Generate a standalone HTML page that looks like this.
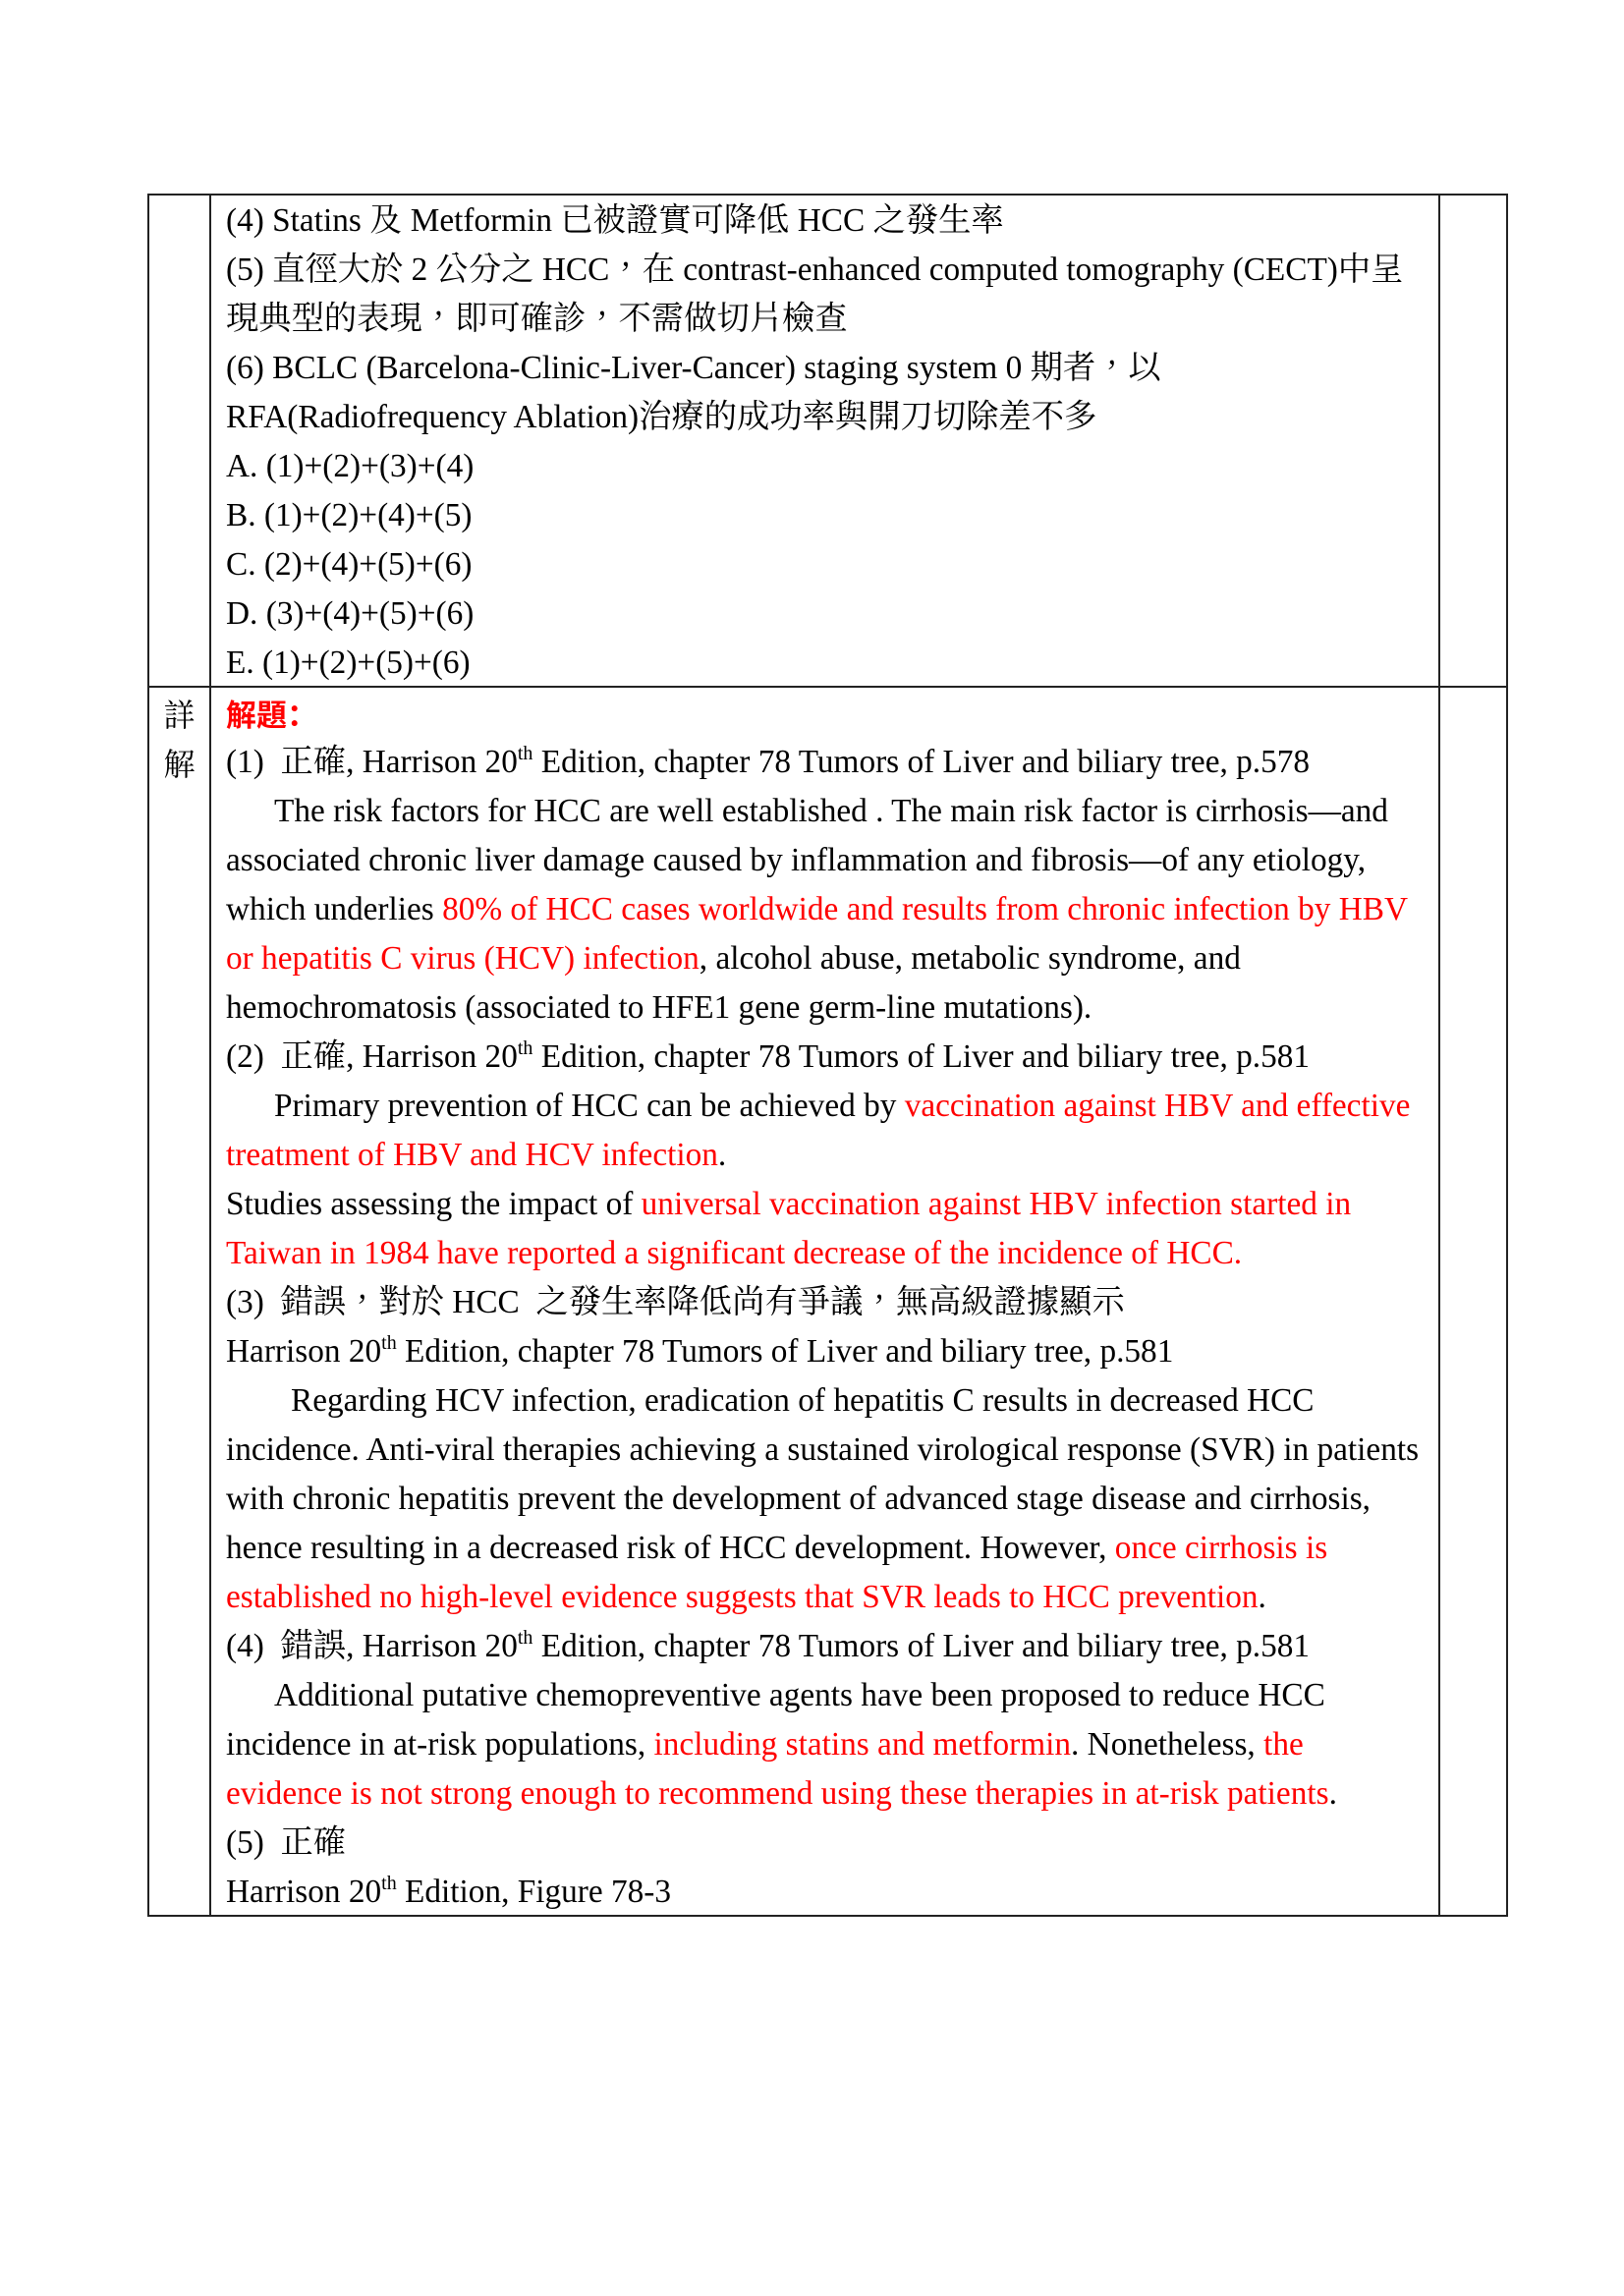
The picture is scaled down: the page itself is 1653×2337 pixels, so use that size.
<!DOCTYPE html>
<html><head><meta charset="utf-8"><style>
html,body{margin:0;padding:0;background:#fff;}
body{width:1653px;height:2337px;position:relative;overflow:hidden;font-family:"Liberation Serif","Noto Serif CJK TC","Noto Serif CJK SC",serif;font-size:33.3px;color:#000;}
.b{position:absolute;background:#222;}
.l{position:absolute;left:230px;height:50px;line-height:50px;white-space:nowrap;}
.r{color:#f00;}
sup{font-size:20px;line-height:0;vertical-align:13px;}
.k{position:absolute;left:151px;width:63px;text-align:center;height:50px;line-height:50px;font-family:"Noto Serif CJK SC",serif;font-size:32px;}
.h{color:#f00;font-weight:bold;font-family:"Noto Sans CJK SC",sans-serif;font-size:31px;}
</style></head><body>
<div class="b" style="left:150px;top:197px;width:1385px;height:2px"></div>
<div class="b" style="left:150px;top:698px;width:1385px;height:2px"></div>
<div class="b" style="left:150px;top:1949px;width:1385px;height:2px"></div>
<div class="b" style="left:150px;top:197px;width:2px;height:1754px"></div>
<div class="b" style="left:213px;top:197px;width:2px;height:1754px"></div>
<div class="b" style="left:1464px;top:197px;width:2px;height:1754px"></div>
<div class="b" style="left:1533px;top:197px;width:2px;height:1754px"></div>

<div class="l" style="top:200px">(4) Statins 及 Metformin 已被證實可降低 HCC 之發生率</div>
<div class="l" style="top:250px">(5) 直徑大於 2 公分之 HCC，在 contrast-enhanced computed tomography (CECT)中呈</div>
<div class="l" style="top:300px">現典型的表現，即可確診，不需做切片檢查</div>
<div class="l" style="top:350px">(6) BCLC (Barcelona-Clinic-Liver-Cancer) staging system 0 期者，以</div>
<div class="l" style="top:400px">RFA(Radiofrequency Ablation)治療的成功率與開刀切除差不多</div>
<div class="l" style="top:450px">A. (1)+(2)+(3)+(4)</div>
<div class="l" style="top:500px">B. (1)+(2)+(4)+(5)</div>
<div class="l" style="top:550px">C. (2)+(4)+(5)+(6)</div>
<div class="l" style="top:600px">D. (3)+(4)+(5)+(6)</div>
<div class="l" style="top:650px">E. (1)+(2)+(5)+(6)</div>

<div class="k" style="top:701px">詳</div>
<div class="k" style="top:751px">解</div>

<div class="l" style="top:701px"><span class="h">解題：</span></div>
<div class="l" style="top:751px">(1)&nbsp; 正確, Harrison 20<sup>th</sup> Edition, chapter 78 Tumors of Liver and biliary tree, p.578</div>
<div class="l" style="top:801px;left:279px">The risk factors for HCC are well established . The main risk factor is cirrhosis—and</div>
<div class="l" style="top:851px">associated chronic liver damage caused by inflammation and fibrosis—of any etiology,</div>
<div class="l" style="top:901px">which underlies <span class="r">80% of HCC cases worldwide and results from chronic infection by HBV</span></div>
<div class="l" style="top:951px"><span class="r">or hepatitis C virus (HCV) infection</span>, alcohol abuse, metabolic syndrome, and</div>
<div class="l" style="top:1001px">hemochromatosis (associated to HFE1 gene germ-line mutations).</div>
<div class="l" style="top:1051px">(2)&nbsp; 正確, Harrison 20<sup>th</sup> Edition, chapter 78 Tumors of Liver and biliary tree, p.581</div>
<div class="l" style="top:1101px;left:279px">Primary prevention of HCC can be achieved by <span class="r">vaccination against HBV and effective</span></div>
<div class="l" style="top:1151px"><span class="r">treatment of HBV and HCV infection</span>.</div>
<div class="l" style="top:1201px">Studies assessing the impact of <span class="r">universal vaccination against HBV infection started in</span></div>
<div class="l" style="top:1251px"><span class="r">Taiwan in 1984 have reported a significant decrease of the incidence of HCC.</span></div>
<div class="l" style="top:1301px">(3)&nbsp; 錯誤，對於 HCC&nbsp; 之發生率降低尚有爭議，無高級證據顯示</div>
<div class="l" style="top:1351px">Harrison 20<sup>th</sup> Edition, chapter 78 Tumors of Liver and biliary tree, p.581</div>
<div class="l" style="top:1401px;left:296px">Regarding HCV infection, eradication of hepatitis C results in decreased HCC</div>
<div class="l" style="top:1451px">incidence. Anti-viral therapies achieving a sustained virological response (SVR) in patients</div>
<div class="l" style="top:1501px">with chronic hepatitis prevent the development of advanced stage disease and cirrhosis,</div>
<div class="l" style="top:1551px">hence resulting in a decreased risk of HCC development. However, <span class="r">once cirrhosis is</span></div>
<div class="l" style="top:1601px"><span class="r">established no high-level evidence suggests that SVR leads to HCC prevention</span>.</div>
<div class="l" style="top:1651px">(4)&nbsp; 錯誤, Harrison 20<sup>th</sup> Edition, chapter 78 Tumors of Liver and biliary tree, p.581</div>
<div class="l" style="top:1701px;left:279px">Additional putative chemopreventive agents have been proposed to reduce HCC</div>
<div class="l" style="top:1751px">incidence in at-risk populations, <span class="r">including statins and metformin</span>. Nonetheless, <span class="r">the</span></div>
<div class="l" style="top:1801px"><span class="r">evidence is not strong enough to recommend using these therapies in at-risk patients</span>.</div>
<div class="l" style="top:1851px">(5)&nbsp; 正確</div>
<div class="l" style="top:1901px">Harrison 20<sup>th</sup> Edition, Figure 78-3</div>
</body></html>
